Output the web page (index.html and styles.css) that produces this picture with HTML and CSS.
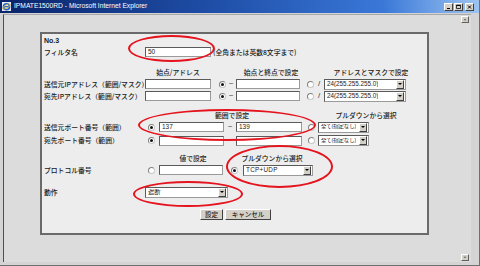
FILE: index.html
```html
<!DOCTYPE html>
<html lang="ja">
<head>
<meta charset="utf-8">
<title>IPMATE1500RD</title>
<link rel="stylesheet" href="styles.css">
</head>
<body>
<div class="window">
  <div class="titlebar">
    <svg class="ie" viewBox="0 0 9 9" width="9" height="9">
      <rect x="0" y="0" width="9" height="9" fill="#e8eef8"/>
      <circle cx="4.5" cy="4.7" r="3" fill="none" stroke="#1a5fd0" stroke-width="1.6"/>
      <line x1="2" y1="4.7" x2="7" y2="4.7" stroke="#1a5fd0" stroke-width="1.2"/>
      <ellipse cx="4.5" cy="4.5" rx="4.3" ry="1.6" fill="none" stroke="#e0b020" stroke-width="0.8" transform="rotate(-30 4.5 4.5)"/>
    </svg>
    <span class="title">IPMATE1500RD - Microsoft Internet Explorer</span>
    <div class="ctrls">
      <span class="cb"><svg viewBox="0 0 8 8" width="8" height="8"><line x1="2" y1="6" x2="6" y2="6" stroke="#000" stroke-width="1.3"/></svg></span>
      <span class="cb"><svg viewBox="0 0 8 8" width="8" height="8"><rect x="1.5" y="1.5" width="5" height="4.5" fill="none" stroke="#000" stroke-width="1"/><line x1="1.5" y1="2" x2="6.5" y2="2" stroke="#000" stroke-width="1.2"/></svg></span>
      <span class="cb cb-close"><svg viewBox="0 0 8 8" width="8" height="8"><path d="M2 2 L6 6 M6 2 L2 6" stroke="#000" stroke-width="1.3"/></svg></span>
    </div>
  </div>
  <div class="client">
    <div class="page">
      <div class="panel">
        <div class="row r-no"><span class="no">No.3</span></div>
        <div class="row r-name">
          <span class="label">フィルタ名</span>
          <span class="field w66">50</span>
          <span class="note">(全角または英数8文字まで)</span>
        </div>
        <div class="row head h-1">
          <span class="hc h1a">始点/アドレス</span>
          <span class="hc h1b">始点と終点で設定</span>
          <span class="hc h1c">アドレスとマスクで設定</span>
        </div>
        <div class="row r-ip">
          <span class="label">送信元IPアドレス（範囲/マスク）</span>
          <span class="field w66"></span>
          <span class="radio on ml8"></span>
          <span class="sym">~</span>
          <span class="field w64"></span>
          <span class="radio ml7"></span>
          <span class="sym">/</span>
          <span class="select s82"><span class="val">24(255.255.255.0)</span><span class="drop"></span></span>
        </div>
        <div class="row r-ip">
          <span class="label">宛先IPアドレス（範囲/マスク）</span>
          <span class="field w66"></span>
          <span class="radio on ml8"></span>
          <span class="sym">~</span>
          <span class="field w64"></span>
          <span class="radio ml7"></span>
          <span class="sym">/</span>
          <span class="select s82"><span class="val">24(255.255.255.0)</span><span class="drop"></span></span>
        </div>
        <div class="row head h-2">
          <span class="hc h2a">範囲で設定</span>
          <span class="hc h2b">プルダウンから選択</span>
        </div>
        <div class="row r-port">
          <span class="label">送信元ポート番号（範囲）</span>
          <span class="radio on ml3"></span>
          <span class="field w65 ml4">137</span>
          <span class="sym s12">~</span>
          <span class="field w66">139</span>
          <span class="radio ml6"></span>
          <span class="select s51 ml3"><span class="val sm">全て(指定なし)</span><span class="drop"></span></span>
        </div>
        <div class="row r-port2">
          <span class="label">宛先ポート番号（範囲）</span>
          <span class="radio on ml3"></span>
          <span class="field w65 ml4"></span>
          <span class="sym s12"></span>
          <span class="field w66"></span>
          <span class="radio ml6"></span>
          <span class="select s51 ml3"><span class="val sm">全て(指定なし)</span><span class="drop"></span></span>
        </div>
        <div class="row head h-3">
          <span class="hc h3a">値で設定</span>
          <span class="hc h3b">プルダウンから選択</span>
        </div>
        <div class="row r-proto">
          <span class="label">プロトコル番号</span>
          <span class="radio ml3"></span>
          <span class="field w64 ml4"></span>
          <span class="radio on ml8"></span>
          <span class="select s70 ml5"><span class="val lat">TCP+UDP</span><span class="drop"></span></span>
        </div>
        <div class="row r-act">
          <span class="label">動作</span>
          <span class="select s83"><span class="val">遮断</span><span class="drop"></span></span>
        </div>
        <div class="row r-btn">
          <span class="btn b-set">設定</span>
          <span class="btn b-cancel">キャンセル</span>
        </div>

        <span class="mark m1"></span>
        <span class="mark m2"></span>
        <span class="mark m3"></span>
        <span class="mark m4"></span>
      </div>
    </div>
    <div class="vscroll">
      <span class="sb"><svg viewBox="0 0 8 7" width="8" height="7"><path d="M2 4.5 L4 2.5 L6 4.5 Z" fill="#555"/></svg></span>
      <span class="sb"><svg viewBox="0 0 8 7" width="8" height="7"><path d="M2 2.5 L4 4.5 L6 2.5 Z" fill="#555"/></svg></span>
    </div>
  </div>
</div>
</body>
</html>
```

FILE: styles.css
```css
* { box-sizing: border-box; }
html, body { margin: 0; padding: 0; }
body {
  width: 480px;
  height: 266px;
  overflow: hidden;
  background: #d6d6d6;
  font-family: "Noto Sans CJK JP", sans-serif;
  color: #1a1a1a;
}
.window {
  width: 480px;
  height: 266px;
  display: flex;
  flex-direction: column;
  background: #d4d4d4;
  border-right: 1px solid #707070;
  border-bottom: 1px solid #707070;
}
.titlebar {
  height: 13px;
  flex: none;
  display: flex;
  align-items: center;
  padding-left: 2px;
  background: linear-gradient(to right, #0a246a 0%, #1f4fa8 45%, #3a78d8 80%, #9cc4f0 100%);
}
.ie { flex: none; display: block; }
.title {
  margin-left: 3px;
  color: #ffffff;
  font-family: "Liberation Sans", sans-serif;
  font-size: 6.7px;
  line-height: 1;
  white-space: nowrap;
}
.ctrls {
  margin-left: auto;
  margin-right: 5px;
  display: flex;
  gap: 1px;
}
.cb {
  width: 9px;
  height: 8px;
  background: #d4d0c8;
  border-top: 1px solid #fff;
  border-left: 1px solid #fff;
  border-right: 1px solid #404040;
  border-bottom: 1px solid #404040;
  display: flex;
  align-items: center;
  justify-content: center;
  overflow: hidden;
}
.cb svg { display: block; width: 7px; height: 6px; }
.cb-close { margin-left: 1px; }

.client {
  flex: 1;
  margin: 1px 8px 3px 3px;
  border-left: 1px solid #505050;
  border-top: 1px solid #a8a8a8;
  background: #dcdcdc;
  display: flex;
}
.page {
  flex: 1;
  padding: 17px 0 0 36px;
}
.vscroll {
  width: 10px;
  flex: none;
  display: flex;
  flex-direction: column;
  justify-content: space-between;
  padding: 1px 0 1px 0;
}
.sb {
  width: 8px;
  height: 7px;
  background: #d4d0c8;
  border-top: 1px solid #fff;
  border-left: 1px solid #fff;
  border-right: 1px solid #606060;
  border-bottom: 1px solid #606060;
  display: flex;
  align-items: center;
  justify-content: center;
}
.sb svg { display: block; width: 6px; height: 5px; }

.panel {
  position: relative;
  width: 389px;
  height: 203px;
  border: 2px solid #6a6a6a;
  background: #ededed;
  padding: 0 0 0 2px;
  display: flex;
  flex-direction: column;
  font-size: 6.8px;
  font-weight: 500;
  line-height: 1;
}
.row {
  display: flex;
  align-items: center;
  flex: none;
  white-space: nowrap;
}
.r-no { height: 13px; }
.no {
  font-family: "Liberation Sans", sans-serif;
  font-weight: bold;
  font-size: 7px;
}
.r-name { height: 10px; }
.h-1 { height: 12px; margin-top: 9px; }
.r-ip { height: 12px; }
.h-2 { height: 12px; margin-top: 7px; }
.r-port { height: 12px; }
.r-port2 { height: 13px; margin-top: 1px; }
.h-3 { height: 12px; margin-top: 5px; }
.r-proto { height: 12px; }
.r-act { height: 12px; margin-top: 10px; }
.r-btn { height: 12px; margin-top: 10px; padding-left: 156px; gap: 2px; }

.label { width: 101px; flex: none; overflow: visible; }
.note { margin-left: 2px; }

.hc { flex: none; text-align: center; }
.h1a { margin-left: 101px; width: 66px; }
.h1b { margin-left: 25px; width: 70px; }
.h1c { margin-left: 24px; width: 82px; }
.h2a { margin-left: 106px; width: 164px; }
.h2b { width: 104px; }
.h3a { margin-left: 114px; width: 70px; }
.h3b { width: 88px; }

.field {
  flex: none;
  height: 10px;
  background: #ffffff;
  border-top: 1px solid #5a5a5a;
  border-left: 1px solid #5a5a5a;
  border-right: 1px solid #9a9a9a;
  border-bottom: 1px solid #9a9a9a;
  font-family: "Liberation Sans", sans-serif;
  font-size: 6.5px;
  font-weight: normal;
  line-height: 8px;
  padding-left: 2px;
  color: #222;
}
.w64 { width: 64px; }
.w65 { width: 65px; }
.w66 { width: 66px; }

.radio {
  flex: none;
  width: 7px;
  height: 7px;
  border-radius: 50%;
  background: #fff;
  border: 1px solid #808080;
  border-right-color: #c8c8c8;
  border-bottom-color: #c8c8c8;
  display: flex;
  align-items: center;
  justify-content: center;
}
.radio.on::after {
  content: "";
  width: 3px;
  height: 3px;
  border-radius: 50%;
  background: #111;
}
.ml3 { margin-left: 3px; }
.ml4 { margin-left: 4px; }
.ml5 { margin-left: 5px; }
.ml6 { margin-left: 6px; }
.ml7 { margin-left: 7px; }
.ml8 { margin-left: 8px; }

.sym {
  flex: none;
  width: 10px;
  text-align: center;
  font-family: "Liberation Sans", sans-serif;
  font-size: 8px;
  font-weight: normal;
  color: #333;
}
.s12 { width: 12px; }

.select {
  flex: none;
  height: 11px;
  background: #fff;
  border-top: 1px solid #5a5a5a;
  border-left: 1px solid #5a5a5a;
  border-right: 1px solid #9a9a9a;
  border-bottom: 1px solid #9a9a9a;
  display: flex;
  align-items: center;
  justify-content: space-between;
  padding: 0 0 0 2px;
  overflow: hidden;
}
.val {
  font-family: "Liberation Sans", "Noto Sans CJK JP", sans-serif;
  font-size: 6.3px;
  font-weight: normal;
  color: #222;
  overflow: hidden;
}
.val.sm { font-size: 5.4px; letter-spacing: -0.1px; }
.val.lat { letter-spacing: 0.3px; }
.drop {
  flex: none;
  width: 8px;
  height: 9px;
  margin-right: 1px;
  background: #d4d0c8;
  border-top: 1px solid #fff;
  border-left: 1px solid #fff;
  border-right: 1px solid #404040;
  border-bottom: 1px solid #404040;
  position: relative;
}
.drop::after {
  content: "";
  position: absolute;
  left: 1px;
  top: 2px;
  border-left: 2px solid transparent;
  border-right: 2px solid transparent;
  border-top: 2px solid #000;
}
.s51 { width: 51px; }
.s70 { width: 70px; }
.s82 { width: 82px; }
.s83 { width: 83px; }

.btn {
  flex: none;
  height: 11px;
  background: #d4d0c8;
  border-top: 1px solid #ffffff;
  border-left: 1px solid #ffffff;
  border-right: 1px solid #404040;
  border-bottom: 1px solid #404040;
  display: flex;
  align-items: center;
  justify-content: center;
  font-size: 6.5px;
}
.b-set { width: 23px; }
.b-cancel { width: 46px; }

.mark {
  position: absolute;
  border: 2px solid #e5131d;
  border-radius: 50%;
  pointer-events: none;
}
.m1 { left: 86px; top: 1px; width: 87px; height: 27px; }
.m2 { left: 96px; top: 75px; width: 178px; height: 32px; }
.m3 { left: 184px; top: 111px; width: 107px; height: 43px; }
.m4 { left: 91px; top: 147px; width: 110px; height: 26px; }
```
